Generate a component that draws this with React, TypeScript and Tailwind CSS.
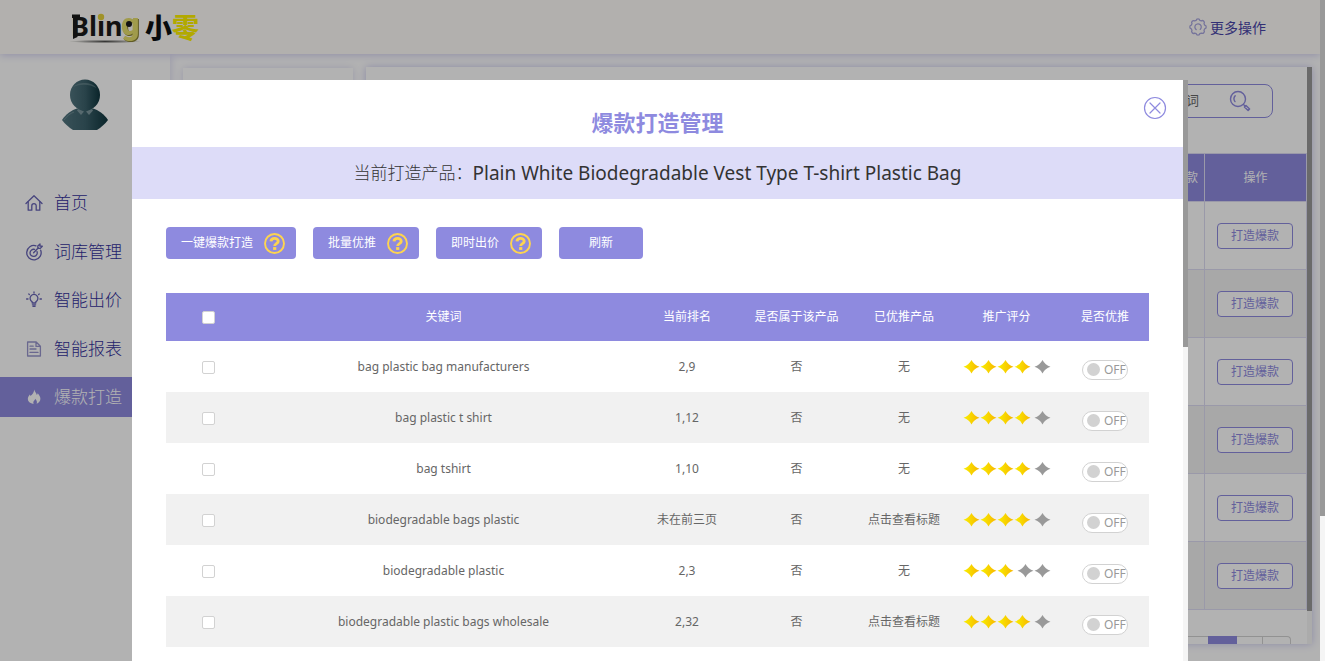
import React from "react";

const rows = [
  { keyword: "bag plastic bag manufacturers", rank: "2,9", promoted: "无", score: 4 },
  { keyword: "bag plastic t shirt", rank: "1,12", promoted: "无", score: 4 },
  { keyword: "bag tshirt", rank: "1,10", promoted: "无", score: 4 },
  { keyword: "biodegradable bags plastic", rank: "未在前三页", promoted: "点击查看标题", score: 4 },
  { keyword: "biodegradable plastic", rank: "2,3", promoted: "无", score: 3 },
  { keyword: "biodegradable plastic bags wholesale", rank: "2,32", promoted: "点击查看标题", score: 4 },
];

const stroke = {
  fill: "none",
  stroke: "currentColor",
  strokeWidth: 1.3,
  strokeLinecap: "round" as const,
  strokeLinejoin: "round" as const,
};

function HomeIcon() {
  return (
    <svg width="18" height="18" viewBox="0 0 18 18" {...stroke} className="opacity-75" aria-hidden="true">
      <path d="M1 9.5 9 1.8l8 7.7" />
      <path d="M3.2 8v8.2h3.6v-4.4a2.2 2.2 0 0 1 4.4 0v4.4h3.6V8" />
    </svg>
  );
}

function TargetIcon() {
  return (
    <svg width="18" height="18" viewBox="0 0 18 18" {...stroke} className="opacity-75" aria-hidden="true">
      <path d="M15.700 7.200A7.200 7.200 0 1 1 11 2.800" />
      <path d="M12 8.600a3.600 3.600 0 1 1-2.400-2.200" />
      <path d="m8.600 9.800 4.800-5M12.800 5V3L15 1v2.200h2.300l-2 2.200h-2.500" />
    </svg>
  );
}

function BulbIcon() {
  return (
    <svg width="18" height="18" viewBox="0 0 18 18" {...stroke} className="opacity-75" aria-hidden="true">
      <path d="M7.2 12v-1.2a3.9 3.9 0 1 1 3.6 0V12z" />
      <path d="M7.4 13.8h3.2M8 15.4h2M9 1v1M3.8 3l.6.6M14.2 3l-.6.6M1.6 8h1.4M15 8h1.4" />
    </svg>
  );
}

function ReportIcon() {
  return (
    <svg width="18" height="18" viewBox="0 0 18 18" {...stroke} className="opacity-50" aria-hidden="true">
      <path d="M2.6 2h8.6l4.2 4.2V16H2.6zM11 2v4.4h4.4" />
      <path d="M5 6.2h3.2M5 9h6M5 12.4h8" />
    </svg>
  );
}

function FlameIcon() {
  return (
    <svg width="18" height="18" viewBox="0 0 18 18" fill="currentColor" aria-hidden="true">
      <path d="M9.200 1.600c.4 2 2.200 3.200 2.600 5.400.6-.4.8-1 .8-1.800 1.600 1.600 2.800 3.600 2.800 5.600 0 2.400-1.600 4.200-3.800 5 .8-1.800.2-3.400-1.400-5-.2 1-.8 1.400-1.400 2.200-.6.800-.6 1.800-.2 2.900C5 15.300 2.800 13.700 2.800 11c0-1.900 1.200-3.300 2-4.600.4.500.5.900.6 1.500C7.600 6.600 9 4.400 9.200 1.600z" />
    </svg>
  );
}

const menu = [
  { label: "首页", icon: <HomeIcon /> },
  { label: "词库管理", icon: <TargetIcon /> },
  { label: "智能出价", icon: <BulbIcon /> },
  { label: "智能报表", icon: <ReportIcon /> },
  { label: "爆款打造", icon: <FlameIcon />, active: true },
];

function Avatar() {
  return (
    <svg width="48" height="52" viewBox="0 0 48 52" role="img" aria-label="用户头像">
      <defs>
        <linearGradient id="avatar" x1="0" x2="1" y1="0" y2="0">
          <stop offset="0" stopColor="#52757f" />
          <stop offset=".5" stopColor="#3c616b" />
          <stop offset="1" stopColor="#0f353d" />
        </linearGradient>
      </defs>
      <path d="M1 41c4-6 9-9.500 15-11.500h16c6 2 11 5.500 15 11.500-3 4-7 7.500-11 10H12C8 48.500 4 45 1 41z" fill="url(#avatar)" />
      <ellipse cx="24" cy="16" rx="15" ry="15.500" fill="url(#avatar)" />
      <path d="M12.500 8C16 3 31 2 35.500 9 29 5 19 4.500 12.500 8z" fill="#7c979e" opacity=".5" />
      <path d="m17 30-1 1.500L20 36l3-3.500zM31 30l1 1.500L28 36l-3-3.500z" fill="#7c979e" />
      <path d="M3 41c3-4 6-6.500 10-8" stroke="#7c979e" fill="none" opacity=".7" />
    </svg>
  );
}

function Logo() {
  return (
    <a href="#" className="ml-[70px]" aria-label="Bling 小零">
      <svg width="134" height="54" viewBox="0 0 134 54" className="block">
        <defs>
          <radialGradient id="logo-shade">
            <stop offset="0" stopColor="#000" stopOpacity=".7" />
            <stop offset="1" stopColor="#000" stopOpacity="0" />
          </radialGradient>
        </defs>
        <ellipse cx="35" cy="41.500" rx="36" ry="1.800" fill="url(#logo-shade)" />
        <path d="M2 14.500h8v3.500H2zM3 17h4.500v20L3 39z" fill="#1b1b1b" />
        <text x="1" y="36" fontSize="27" fontWeight="700" fill="#1b1b1b">
          Blin
        </text>
        <circle cx="31" cy="17" r="3.200" fill="#e6d23c" />
        <text x="51" y="35" fontSize="32" fontWeight="900" fill="#e6de6c" fontFamily="Roboto" className="drop-shadow-[1px_1px_0_#8c8434]">
          g
        </text>
        <circle cx="59" cy="24" r="3" fill="#1b1b1b" />
        <text x="75" y="38" fontSize="27" fontWeight="900" fill="#0c1014" fontFamily="'Noto Sans CJK SC'">
          小<tspan fill="#fff200">零</tspan>
        </text>
      </svg>
    </a>
  );
}

function GearIcon() {
  return (
    <svg width="18" height="18" viewBox="0 0 18 18" {...stroke} className="text-[#a9a6df]" aria-hidden="true">
      <path d="M7.200 2.300Q7.400.8 9 .8t1.800 1.500l1.600.6q1.300-.9 2.400.3t.2 2.400l.7 1.600q1.500.2 1.500 1.800t-1.500 1.800l-.7 1.600q.9 1.300-.2 2.400t-2.400.3l-1.600.6Q10.600 17.200 9 17.200t-1.800-1.500l-1.600-.6q-1.300.9-2.400-.3t-.2-2.400l-.7-1.600Q.8 10.600.8 9t1.500-1.800L3 5.600q-.9-1.300.2-2.400t2.400-.3z" />
      <path d="M7.200 11.600a3.200 3.200 0 1 1 4-.2" />
    </svg>
  );
}

function SearchIcon() {
  return (
    <svg width="22" height="22" viewBox="0 0 22 22" {...stroke} strokeWidth={1.400} aria-hidden="true">
      <circle cx="9" cy="9" r="7.500" />
      <path d="M6.200 5.800C4.700 7.500 4.800 10 6 11.600M14.500 14.500l1.500 1.500M15.400 17l1.600-1.400 3.600 3.400-1.500 1.600z" />
    </svg>
  );
}

function QuestionIcon() {
  return (
    <svg width="21" height="21" viewBox="0 0 21 21" fill="none" stroke="#fdd44f" aria-hidden="true">
      <circle cx="10.500" cy="10.500" r="9.500" strokeWidth="1.900" />
      <path d="M7 8.400c.1-3.900 7.200-4 7.200-.2 0 2.500-3.500 2.300-3.500 4.700" strokeWidth="2.900" />
      <path d="M9.100 15.500h3.200" strokeWidth="2.800" />
    </svg>
  );
}

function Star({ on }: { on: boolean }) {
  return (
    <svg width="17" height="16" viewBox="0 0 17 16" aria-hidden="true">
      <defs>
        <linearGradient id="gold" x1="0" x2="1" y1="0" y2="0">
          <stop offset="0" stopColor="#f8f000" />
          <stop offset="1" stopColor="#f8b500" />
        </linearGradient>
      </defs>
      <path d="M8.500 1Q11.200 6.200 16.500 7.700 11.200 9.200 8.500 14.400 5.800 9.200.5 7.700 5.800 6.200 8.500 1z" fill={on ? "url(#gold)" : "#999"} />
    </svg>
  );
}

function Rating({ score }: { score: number }) {
  return (
    <div className="flex items-center justify-center" role="img" aria-label={`${score} / 5`}>
      <span className="flex">
        {Array.from({ length: score }, (_, i) => (
          <Star key={i} on />
        ))}
      </span>
      <span className="ml-[3px] flex">
        {Array.from({ length: 5 - score }, (_, i) => (
          <Star key={i} on={false} />
        ))}
      </span>
    </div>
  );
}

function Toggle({ label }: { label: string }) {
  return (
    <label className="mx-auto mt-[6px] flex h-5 w-[46px] cursor-pointer items-center rounded-full border border-[#d2d2d2] bg-white pl-1 text-[#999]">
      <input type="checkbox" role="switch" aria-label={label} className="size-[13px] shrink-0 appearance-none rounded-full bg-[#d2d2d2]" />
      <span className="ml-1 text-[12px] leading-[18px]">OFF</span>
    </label>
  );
}

function Check({ label }: { label: string }) {
  return (
    <input
      type="checkbox"
      aria-label={label}
      className="mx-auto mt-px block size-[13px] appearance-none rounded-[2px] border border-[#d2d2d2] bg-white"
    />
  );
}

function ActionButton({ children, help }: { children: React.ReactNode; help?: boolean }) {
  return (
    <button
      type="button"
      className={
        help
          ? "flex h-8 items-center gap-[11px] rounded-[4px] bg-[#8e8adf] pr-[11px] pl-[15px] text-[12px] text-white"
          : "flex h-8 items-center rounded-[4px] bg-[#8e8adf] px-[30px] text-[12px] text-white"
      }
    >
      {children}
      {help && <QuestionIcon />}
    </button>
  );
}

function Page() {
  return (
    <div className="flex h-full flex-col overflow-hidden bg-white">
      <header className="z-10 flex h-[54px] shrink-0 items-center justify-between bg-[#fffdf9] shadow-[0_1px_8px_#cfcdf0]">
        <Logo />
        <button type="button" className="mr-[54px] flex items-center gap-[3px] text-[14px] text-[#4844a8]">
          <GearIcon />
          更多操作
        </button>
      </header>
      <div className="flex min-h-0 flex-1 gap-[13px] pr-2">
        <aside className="w-[170px] shrink-0 shadow-[1px_0_8px_#dddcf3]">
          <div className="flex justify-center pt-[25px]">
            <Avatar />
          </div>
          <nav className="mt-[52px] flex h-[234px] flex-col justify-between">
            {menu.map((m) => (
              <a
                key={m.label}
                href="#"
                className={
                  m.active
                    ? "flex h-10 items-center gap-[11px] bg-[#8e8adf] pl-[25px] text-[17px] font-light text-white"
                    : "flex h-10 items-center gap-[11px] pl-[25px] text-[17px] font-light text-[#332f9c]"
                }
              >
                {m.icon}
                {m.label}
              </a>
            ))}
          </nav>
        </aside>
        <div className="mt-[14px] w-[170px] shrink-0 shadow-[0_0_8px_#dddcf3]" />
        <main className="mt-[13px] mb-[17px] flex flex-1 overflow-hidden shadow-[0_0_8px_#c9c7ee]">
          <div className="flex flex-1 flex-col">
            <div className="flex justify-end pt-[17px] pr-[34px]">
              <div className="flex h-[34px] w-[240px] items-center rounded-lg border border-[#8e8adf] pr-[21px] text-[#8e8adf]">
                <input aria-label="搜索" placeholder="请输入关键词" className="min-w-0 flex-1 bg-transparent pr-[30px] text-right text-[13px] placeholder:text-[#666]" />
                <button type="button" aria-label="查找">
                  <SearchIcon />
                </button>
              </div>
            </div>
            <table className="mt-[35px] w-full table-fixed border-collapse text-center text-[12px] [&_td]:border [&_td]:border-[#dddcf3] [&_th]:border [&_th]:border-[#dddcf3]">
              <thead>
                <tr className="h-[48px] bg-[#8e8adf] text-white">
                  <th className="pr-[6px] text-right font-normal">是否爆款</th>
                  <th className="w-[102px] font-normal">操作</th>
                </tr>
              </thead>
              <tbody>
                {[0, 1, 2, 3, 4, 5].map((i) => (
                  <tr key={i} className="h-[68px] even:bg-[#f1f1f1]">
                    <td />
                    <td className="p-0 pr-px">
                      <button type="button" className="h-[26px] w-[76px] rounded border border-[#8e8adf] bg-white text-[12px] text-[#8e8adf]">
                        打造爆款
                      </button>
                    </td>
                  </tr>
                ))}
              </tbody>
            </table>
            <div className="mt-[26px] mr-[16px] flex h-[30px] shrink-0 justify-end">
              <span className="w-[60px] border-t border-[#d2d2d2]" />
              <span className="w-[29px] bg-[#8e8adf]" />
              <span className="w-[26px] border-t border-r border-[#d2d2d2]" />
              <span className="w-[28px] rounded-tr border-t border-r border-[#d2d2d2]" />
            </div>
          </div>
          <div className="w-[5px] shrink-0 bg-[#f5f5f5]">
            <div className="h-[544px] bg-[#999]" />
          </div>
        </main>
      </div>
    </div>
  );
}

function Modal() {
  return (
    <section role="dialog" aria-label="爆款打造管理" className="relative flex w-4/5 overflow-hidden bg-white">
      <div className="flex-1">
        <button type="button" aria-label="关闭" className="absolute top-4 right-[21px] text-[#8e8adf]">
          <svg width="24" height="24" viewBox="0 0 24 24" {...stroke} strokeWidth={1.200}>
            <circle cx="12" cy="12" r="10.500" />
            <path d="m7 7 10 10M17 7 7 17" />
          </svg>
        </button>
        <h1 className="pt-[26px] pb-[9px] text-center text-[22px] leading-8 font-bold text-[#8e8adf]">爆款打造管理</h1>
        <h2 className="flex h-[52px] items-center justify-center bg-[#dddcf8] text-[#333]">
          <span className="text-[17px] font-light">当前打造产品：</span>
          <span className="text-[19px]">Plain White Biodegradable Vest Type T-shirt Plastic Bag</span>
        </h2>
        <div className="px-[34px] pt-7">
          <div className="flex gap-[17px]">
            <ActionButton help>一键爆款打造</ActionButton>
            <ActionButton help>批量优推</ActionButton>
            <ActionButton help>即时出价</ActionButton>
            <ActionButton>刷新</ActionButton>
          </div>
          <table className="mt-[34px] w-full table-fixed border-collapse text-center text-[12px] text-[#666]">
            <thead>
              <tr className="h-[48px] bg-[#8e8adf] text-white [&_th]:p-0 [&_th]:font-normal">
                <th className="w-[84px]">
                  <Check label="全选" />
                </th>
                <th>关键词</th>
                <th className="w-[100px]">当前排名</th>
                <th className="w-[119px]">是否属于该产品</th>
                <th className="w-[96px]">已优推产品</th>
                <th className="w-[109px]">推广评分</th>
                <th className="w-[88px]">是否优推</th>
              </tr>
            </thead>
            <tbody>
              {rows.map((r) => (
                <tr key={r.keyword} className="h-[51px] even:bg-[#f1f1f1] [&_td]:p-0">
                  <td>
                    <Check label={r.keyword} />
                  </td>
                  <td>{r.keyword}</td>
                  <td>{r.rank}</td>
                  <td>否</td>
                  <td>{r.promoted}</td>
                  <td>
                    <Rating score={r.score} />
                  </td>
                  <td>
                    <Toggle label={r.keyword} />
                  </td>
                </tr>
              ))}
            </tbody>
          </table>
        </div>
      </div>
      <div className="w-[5px] shrink-0 bg-[#f5f5f5]">
        <div className="h-[46%] bg-[#999]" />
      </div>
    </section>
  );
}

export default function App() {
  return (
    <div className="flex h-screen overflow-hidden font-['Noto_Sans','Noto_Sans_CJK_SC',sans-serif]">
      <div className="relative min-w-0 flex-1">
        <Page />
        <div className="absolute inset-0 z-20 flex justify-center bg-black/30 pt-20">
          <Modal />
        </div>
      </div>
      <div className="w-[5px] shrink-0 bg-[#f5f5f5]">
        <div className="h-[78%] bg-[#999]" />
      </div>
    </div>
  );
}
